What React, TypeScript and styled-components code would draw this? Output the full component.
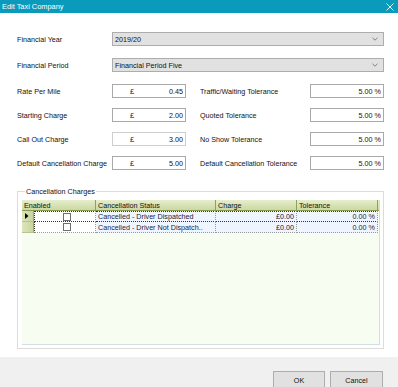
import React from "react";
import styled, { createGlobalStyle } from "styled-components";

const Global = createGlobalStyle`
  html, body { margin: 0; padding: 0; }
  body {
    font-family: "Liberation Sans", Arial, sans-serif;
    font-size: 7.2px;
    color: #000;
    background: #fff;
  }
  * { box-sizing: border-box; }
`;

const Window = styled.div`
  width: 398px;
  height: 387px;
  display: flex;
  flex-direction: column;
  overflow: hidden;
`;

const TitleBar = styled.div`
  height: 13px;
  flex: none;
  background: #0a9bbc;
  color: #fff;
  display: flex;
  align-items: center;
  justify-content: space-between;
  padding: 0 4px 0 2px;
  font-size: 7.4px;
`;

const Body = styled.div`
  flex: 1;
  background: #fff;
  padding: 19px 14px 8px 17px;
  display: flex;
  flex-direction: column;
`;

const TopRow = styled.div<{ $mb?: number }>`
  display: grid;
  grid-template-columns: 95px 272px;
  align-items: center;
  height: 14px;
  margin-bottom: ${(p) => p.$mb ?? 12}px;
`;

const Label = styled.span`
  white-space: nowrap;
  color: #111;
`;

const Combo = styled.div`
  height: 14px;
  background: #e1e1e1;
  border: 1px solid #adadad;
  display: flex;
  align-items: center;
  justify-content: space-between;
  padding: 0 5px 0 2px;
  color: #111;
`;

const FieldGrid = styled.div`
  display: grid;
  grid-template-columns: 95px 74px 14px 110px 74px;
  grid-auto-rows: 14px;
  row-gap: 10px;
  align-items: center;
`;

const Input = styled.div<{ $dim?: boolean }>`
  height: 14px;
  border: 1px solid ${(p) => (p.$dim ? "#cfcfcf" : "#a9a9a9")};
  background: #fff;
  display: flex;
  align-items: center;
  justify-content: space-between;
  padding: 0 2px 0 17px;
  color: #111;
`;

const PctInput = styled(Input)`
  justify-content: flex-end;
  padding: 0 2px 0 2px;
`;

const Group = styled.fieldset`
  margin: 17px 0 0 0;
  padding: 4px 3px 3px 4px;
  border: 1px solid #dcdcdc;
  flex: 1;
  min-height: 0;
  display: flex;
  flex-direction: column;
`;

const Legend = styled.legend`
  padding: 0 1px;
  margin-left: 3px;
  font-size: 7.2px;
  color: #111;
`;

const DataGrid = styled.div`
  flex: 1;
  background: #f7fef1;
  border: 1px solid #d2dde4;
  border-top: none;
  border-left: none;
  display: flex;
  flex-direction: column;
`;

const HeaderRow = styled.div`
  display: grid;
  grid-template-columns: 74px 120px 81px 81px;
  height: 11px;
  background: linear-gradient(#e6eecb, #cbd8a2);
  border-bottom: 1px solid #8a9a50;
`;

const HeadCell = styled.div`
  border-right: 1px solid #8f9f5c;
  padding-left: 2px;
  display: flex;
  align-items: center;
  color: #111;
`;

const Row = styled.div`
  display: grid;
  grid-template-columns: 12px 62px 120px 81px 81px;
  height: 11px;
`;

const RowHead = styled.div`
  background: linear-gradient(90deg, #dde5bb, #c9d59d);
  border-right: 1px solid #9aa86a;
  border-bottom: 1px solid #b8c48c;
  display: flex;
  align-items: center;
  padding-left: 3px;
`;

const Cell = styled.div<{ $white?: boolean; $right?: boolean; $focus?: boolean }>`
  background: ${(p) => (p.$white ? "#fff" : "#eef5ff")};
  border-right: 1px dotted #9a9a9a;
  border-bottom: 1px dotted ${(p) => (p.$focus ? "#333" : "#9a9a9a")};
  border-top: ${(p) => (p.$focus ? "1px dotted #333" : "none")};
  display: flex;
  align-items: center;
  justify-content: ${(p) => (p.$right ? "flex-end" : "flex-start")};
  padding: 0 2px;
  color: #1c1c3c;
  white-space: nowrap;
  overflow: hidden;
`;

const CheckCell = styled(Cell)`
  justify-content: center;
  border-left: 1px dotted #333;
`;

const Check = styled.span`
  width: 8px;
  height: 8px;
  border: 1px solid #6e6e6e;
  background: #fff;
  margin-left: 3px;
`;

const Footer = styled.div`
  height: 30px;
  flex: none;
  background: #f0f0f0;
  display: flex;
  justify-content: flex-end;
  align-items: flex-start;
  padding: 14px 15px 0 0;
  gap: 5px;
`;

const Button = styled.div<{ $w: number }>`
  width: ${(p) => p.$w}px;
  height: 18px;
  background: #e1e1e1;
  border: 1px solid #adadad;
  display: flex;
  justify-content: center;
  padding-top: 4px;
  color: #111;
`;

const Chevron = () => (
  <svg width="6" height="4" viewBox="0 0 6 4">
    <path d="M0.5 0.8 L3 3.2 L5.5 0.8" fill="none" stroke="#666" strokeWidth="0.8" />
  </svg>
);

const CloseIcon = () => (
  <svg width="8" height="8" viewBox="0 0 8 8">
    <path d="M0.5 0.5 L7.5 7.5 M7.5 0.5 L0.5 7.5" stroke="#fff" strokeWidth="0.9" />
  </svg>
);

const Pointer = () => (
  <svg width="4" height="6" viewBox="0 0 4 6">
    <path d="M0 0 L3.5 3 L0 6 Z" fill="#000" />
  </svg>
);

const charges: [string, string, string, string][] = [
  ["Rate Per Mile", "0.45", "Traffic/Waiting Tolerance", "5.00 %"],
  ["Starting Charge", "2.00", "Quoted Tolerance", "5.00 %"],
  ["Call Out Charge", "3.00", "No Show Tolerance", "5.00 %"],
  ["Default Cancellation Charge", "5.00", "Default Cancellation Tolerance", "5.00 %"],
];

const rows = [
  { status: "Cancelled - Driver Dispatched", charge: "£0.00", tol: "0.00 %" },
  { status: "Cancelled - Driver Not Dispatch..", charge: "£0.00", tol: "0.00 %" },
];

export default function App() {
  return (
    <Window>
      <Global />
      <TitleBar>
        <span>Edit Taxi Company</span>
        <CloseIcon />
      </TitleBar>
      <Body>
        <TopRow>
          <Label>Financial Year</Label>
          <Combo>
            <span>2019/20</span>
            <Chevron />
          </Combo>
        </TopRow>
        <TopRow $mb={12}>
          <Label>Financial Period</Label>
          <Combo>
            <span>Financial Period Five</span>
            <Chevron />
          </Combo>
        </TopRow>
        <FieldGrid>
          {charges.map(([l, v, r, p], i) => (
            <React.Fragment key={l}>
              <Label>{l}</Label>
              <Input $dim={i === 2}>
                <span>£</span>
                <span>{v}</span>
              </Input>
              <span />
              <Label>{r}</Label>
              <PctInput>{p}</PctInput>
            </React.Fragment>
          ))}
        </FieldGrid>
        <Group>
          <Legend>Cancellation Charges</Legend>
          <DataGrid>
            <HeaderRow>
              <HeadCell>Enabled</HeadCell>
              <HeadCell>Cancellation Status</HeadCell>
              <HeadCell>Charge</HeadCell>
              <HeadCell>Tolerance</HeadCell>
            </HeaderRow>
            {rows.map((r, i) => (
              <Row key={r.status}>
                <RowHead>{i === 0 && <Pointer />}</RowHead>
                <CheckCell $white $focus={i === 0}>
                  <Check />
                </CheckCell>
                <Cell $focus={i === 0}>{r.status}</Cell>
                <Cell $right $focus={i === 0}>{r.charge}</Cell>
                <Cell $right $focus={i === 0}>{r.tol}</Cell>
              </Row>
            ))}
          </DataGrid>
        </Group>
      </Body>
      <Footer>
        <Button $w={52}>OK</Button>
        <Button $w={53}>Cancel</Button>
      </Footer>
    </Window>
  );
}
